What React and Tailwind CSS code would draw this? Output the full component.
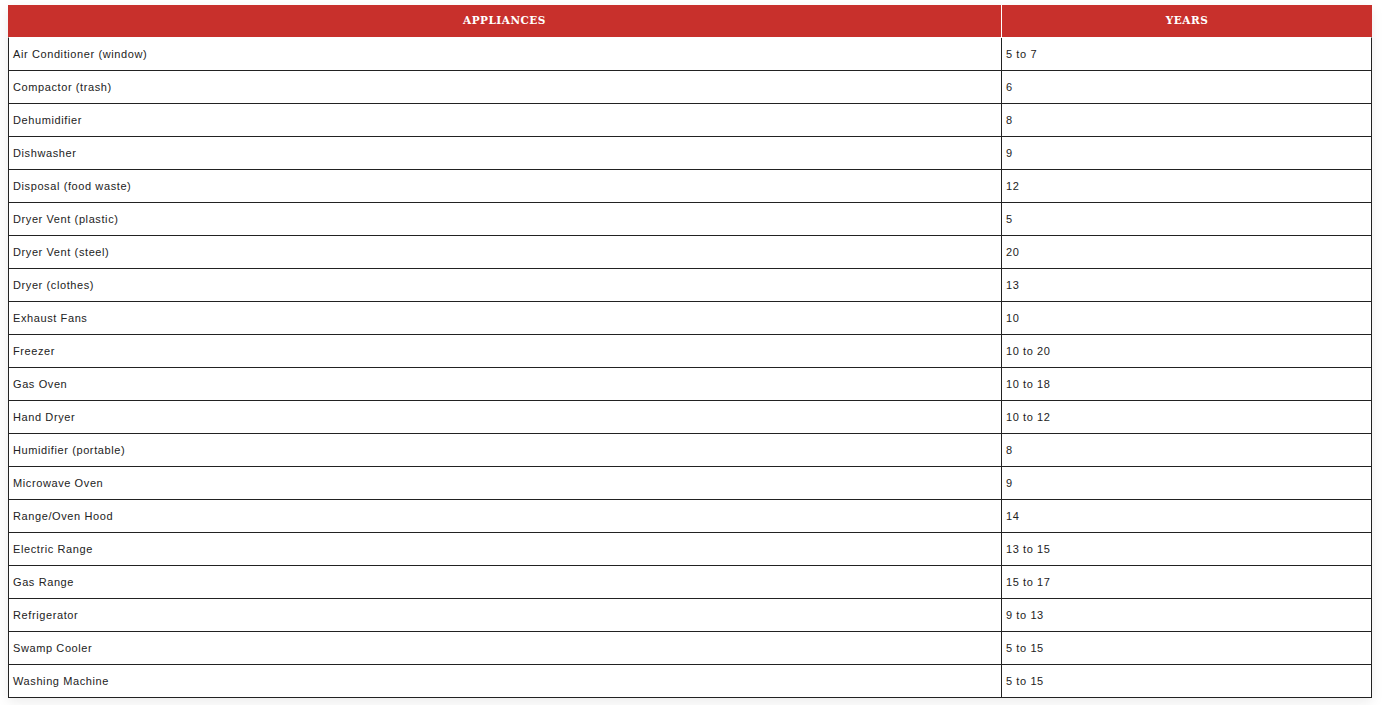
const rows = [
  ["Air Conditioner (window)", "5 to 7"],
  ["Compactor (trash)", "6"],
  ["Dehumidifier", "8"],
  ["Dishwasher", "9"],
  ["Disposal (food waste)", "12"],
  ["Dryer Vent (plastic)", "5"],
  ["Dryer Vent (steel)", "20"],
  ["Dryer (clothes)", "13"],
  ["Exhaust Fans", "10"],
  ["Freezer", "10 to 20"],
  ["Gas Oven", "10 to 18"],
  ["Hand Dryer", "10 to 12"],
  ["Humidifier (portable)", "8"],
  ["Microwave Oven", "9"],
  ["Range/Oven Hood", "14"],
  ["Electric Range", "13 to 15"],
  ["Gas Range", "15 to 17"],
  ["Refrigerator", "9 to 13"],
  ["Swamp Cooler", "5 to 15"],
  ["Washing Machine", "5 to 15"],
];

const App = () => {
  return (
    <div className="min-h-[705px] bg-white pt-[5px] pl-2 font-['Liberation_Sans',Arial,sans-serif]">
      <div className="w-[1364px] shadow-[0_4px_12px_rgba(0,0,0,0.08)]">
        {/* header */}
        <div className="flex h-[32px] bg-[#c8302c] text-white font-['DejaVu_Serif',serif] font-bold text-[10.5px] tracking-[0.5px] uppercase">
          <div className="w-[994px] flex items-center justify-center border-r border-white pb-px">Appliances</div>
          <div className="flex-1 flex items-center justify-center pb-px">Years</div>
        </div>
        {/* rows */}
        <div className="border-x border-t border-t-white border-x-[#222] text-[11px] tracking-[0.6px] text-[#222]">
          {rows.map(([name, years]) => (
            <div key={name} className="flex h-[33px] border-b border-[#222]">
              <div className="w-[993px] flex items-center pl-1 border-r border-[#222]">{name}</div>
              <div className="flex-1 flex items-center pl-1">{years}</div>
            </div>
          ))}
        </div>
      </div>
    </div>
  );
};

export default App;
